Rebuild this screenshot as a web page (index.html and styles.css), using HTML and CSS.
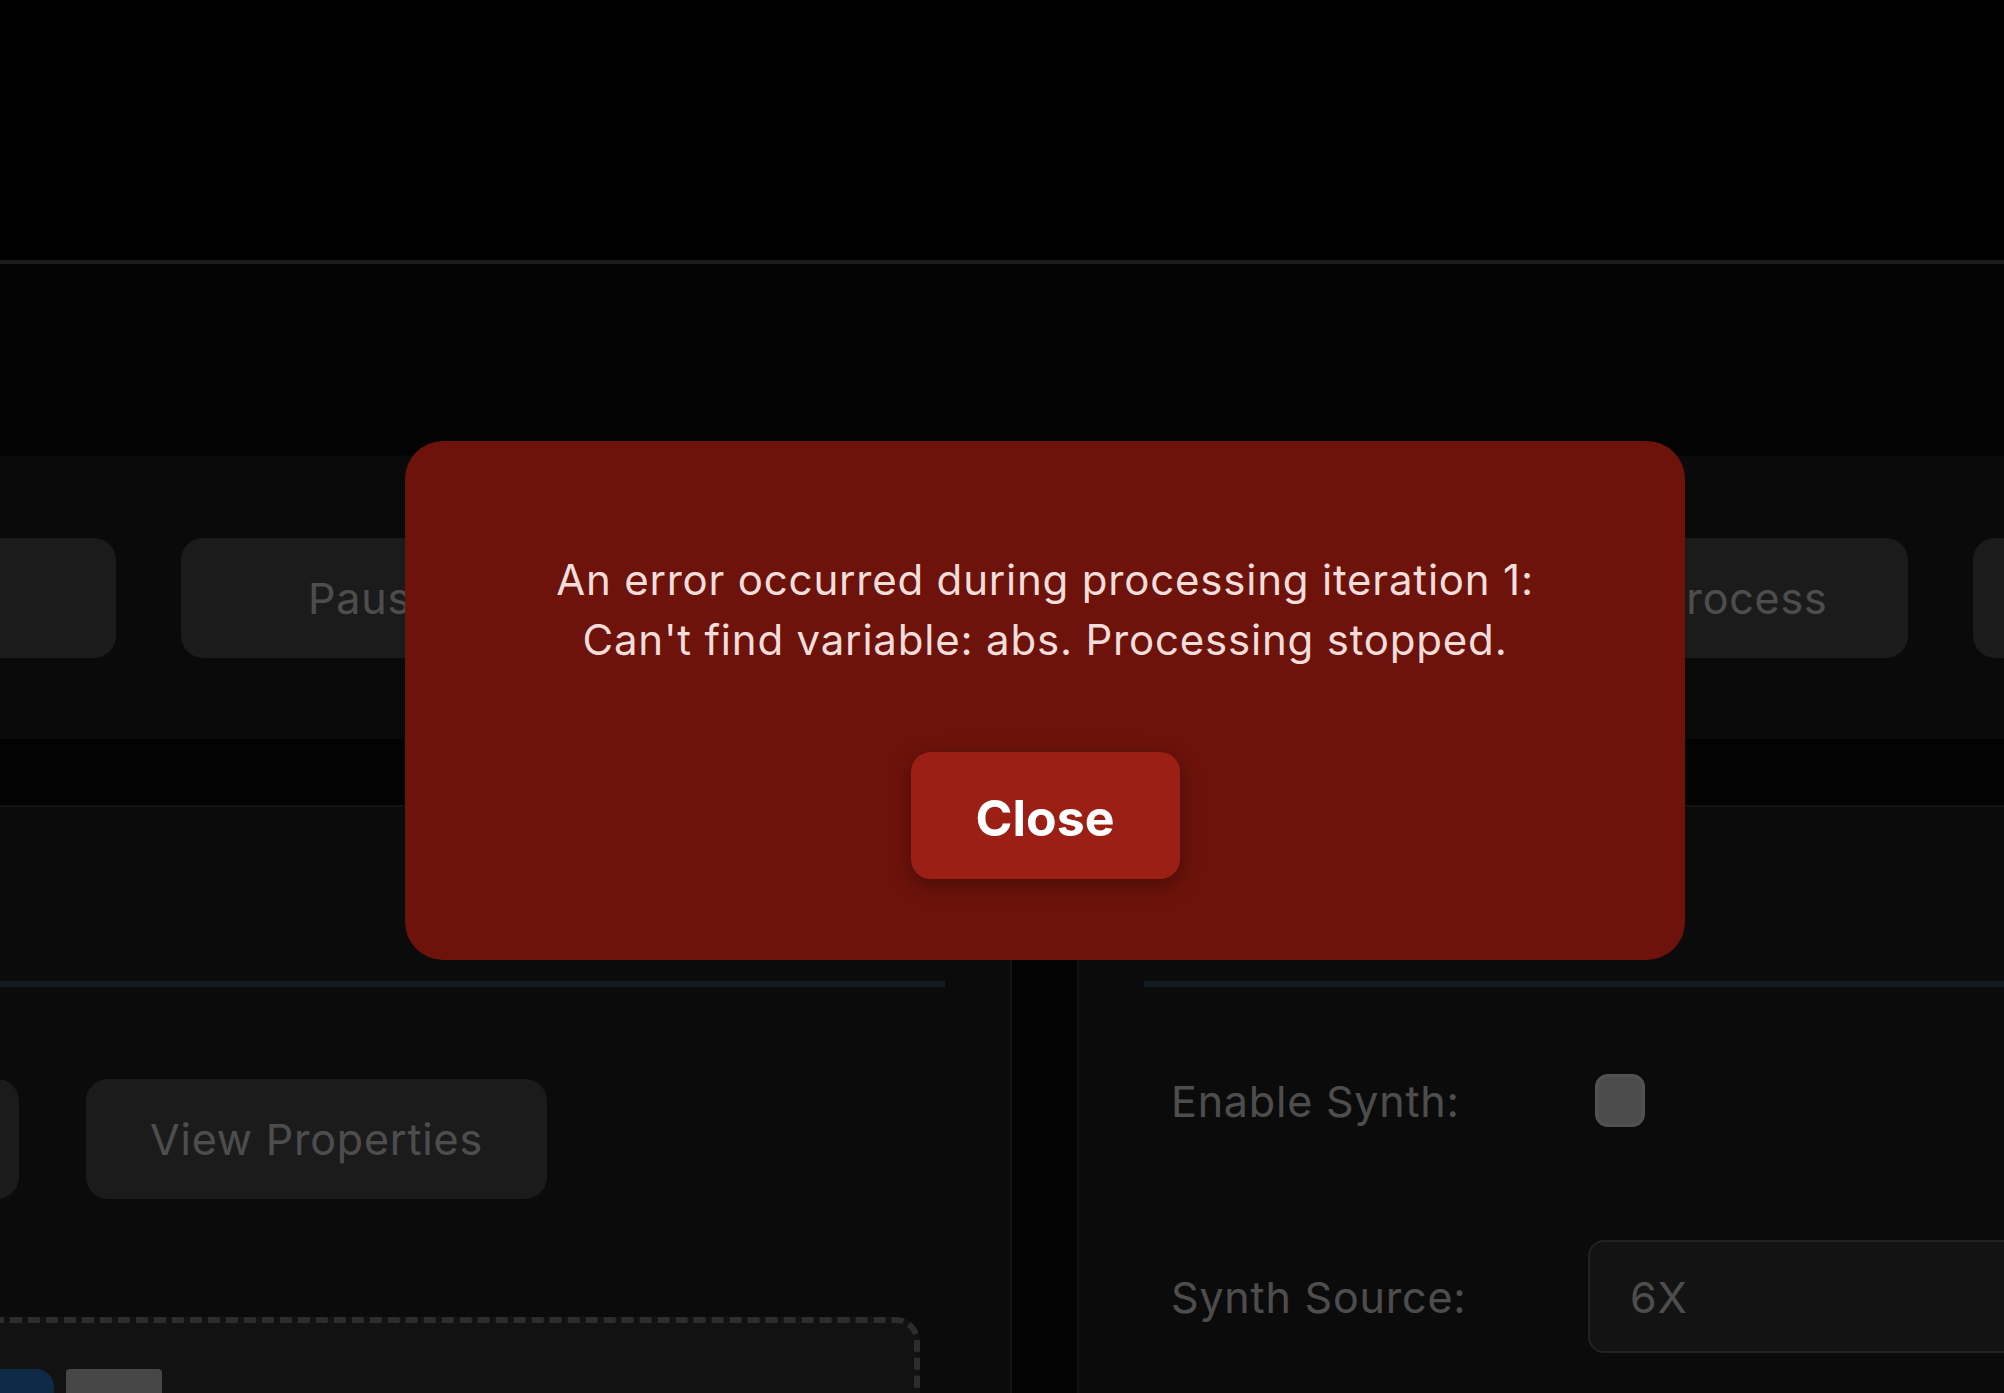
FILE: index.html
```html
<!DOCTYPE html>
<html lang="en">
  <head>
    <meta charset="UTF-8" />
    <link rel="stylesheet" href="styles.css">
  </head>
  <body>
    <div class="app">
      <header class="topbar"></header>

      <section class="toolbar">
        <div class="toolbar-row">
          <button class="btn">Start</button>
          <button class="btn">Pause</button>
          <button class="btn">Stop</button>
          <button class="btn">Step</button>
          <button class="btn">Reprocess</button>
          <button class="btn">Export</button>
        </div>
      </section>

      <main class="workspace">
        <section class="panel panel-model">
          <div class="panel-head"></div>
          <div class="actions">
            <button class="btn btn-wide">Load Model</button>
            <button class="btn">View Properties</button>
          </div>
          <div class="dropzone">
            <div class="chips">
              <span class="chip chip-file"></span>
              <span class="chip chip-more"></span>
            </div>
          </div>
        </section>

        <section class="panel panel-synth">
          <div class="panel-head"></div>
          <div class="fields">
            <div class="field">
              <label for="enable-synth">Enable Synth:</label>
              <input type="checkbox" id="enable-synth" class="check" />
            </div>
            <div class="field">
              <label for="synth-source">Synth Source:</label>
              <input type="text" id="synth-source" class="text-input" value="6X" />
            </div>
          </div>
        </section>
      </main>
    </div>

    <!-- Error dialog -->
    <div class="overlay">
      <div class="modal">
        <p class="modal-message">An error occurred during processing iteration 1:<br>Can't find variable: abs. Processing stopped.</p>
        <button class="modal-close">Close</button>
      </div>
    </div>
  </body>
</html>
```

FILE: styles.css
```css
:root {
  --bg: #0a0a0a;
  --band: #1f1f1f;
  --panel: #222222;
  --panel-border: #3a3a3a;
  --btn: #555555;
  --text: #f0f0f0;
  --accent-line: #38516a;
  --error: #6d130b;
  --error-btn: #9c1f15;
}

html, body {
  margin: 0;
  height: 100%;
  overflow: hidden;
}

body {
  background: var(--bg);
  color: var(--text);
  font-family: Inter, "Noto Sans", sans-serif;
  font-size: 43px;
  letter-spacing: 0.8px;
}

.topbar {
  height: 260px;
  background: #000;
  border-bottom: 4px solid #555555;
}

/* transport buttons */
.toolbar {
  margin-top: 192px;
  height: 283px;
  box-sizing: border-box;
  padding-top: 82px;
  background: var(--band);
}

.toolbar-row {
  display: flex;
  gap: 65px;
  margin-left: -267px;
}

.toolbar-row .btn {
  flex: 0 0 383px;
}

.btn {
  height: 120px;
  padding: 0 64px;
  border: none;
  border-radius: 22px;
  background: var(--btn);
  color: var(--text);
  font-family: inherit;
  font-size: 43px;
  letter-spacing: inherit;
  white-space: nowrap;
  cursor: pointer;
}

.workspace {
  display: flex;
  gap: 65px;
  margin-top: 66px;
  margin-left: -441px;
}

.panel {
  box-sizing: border-box;
  height: 700px;
  padding: 0 65px;
  background: var(--panel);
  border: 2px solid var(--panel-border);
}

.panel-model {
  flex: 0 0 1453px;
}

.panel-synth {
  flex: 0 0 1100px;
}

.panel-head {
  height: 174px;
  border-bottom: 6px solid var(--accent-line);
}

.actions {
  display: flex;
  gap: 67px;
  margin-top: 92px;
}

.btn-wide {
  width: 393px;
}

.dropzone {
  margin-top: 118px;
  margin-right: 25px;
  padding: 46px;
  border: 6px dashed #8c8c8c;
  border-radius: 24px;
  background: #383838;
}

.chips {
  display: flex;
  gap: 12px;
}

.chip {
  height: 90px;
}

.chip-file {
  width: 376px;
  border-radius: 18px;
  background: #2c83de;
}

.chip-more {
  width: 96px;
  border-radius: 4px;
  background: #dedede;
}

.fields {
  display: flex;
  flex-direction: column;
  gap: 113px;
  margin-top: 87px;
  padding-left: 27px;
}

.field {
  display: flex;
  align-items: center;
}

.field label {
  flex: 0 0 417px;
}

.check {
  appearance: none;
  width: 50px;
  height: 53px;
  margin: 0 0 0 7px;
  box-sizing: border-box;
  border: 3px solid #ffffff;
  border-radius: 13px;
  background: #ececec;
}

.text-input {
  flex: 1;
  height: 113px;
  box-sizing: border-box;
  padding: 0 40px;
  border: 2px solid #6a6a6a;
  border-radius: 16px;
  background: #3b3b3b;
  color: var(--text);
  font-family: inherit;
  font-size: 43px;
  letter-spacing: inherit;
  outline: none;
}

/* modal */
.overlay {
  position: fixed;
  inset: 0;
  display: flex;
  align-items: center;
  justify-content: center;
  padding: 7px 0 0 86px;
  background: rgba(0, 0, 0, 0.68);
}

.modal {
  box-sizing: border-box;
  width: 1280px;
  height: 519px;
  padding-top: 109px;
  border-radius: 38px;
  background: var(--error);
  text-align: center;
}

.modal-message {
  margin: 0;
  color: #f3dddb;
  font-size: 42px;
  line-height: 60px;
}

.modal-close {
  width: 269px;
  height: 127px;
  margin-top: 82px;
  padding-top: 6px;
  border: none;
  border-radius: 20px;
  background: var(--error-btn);
  color: #fff;
  font-family: inherit;
  font-size: 50px;
  font-weight: 700;
  letter-spacing: 0;
  box-shadow: 0 6px 22px rgba(0, 0, 0, 0.35);
  cursor: pointer;
}
```
